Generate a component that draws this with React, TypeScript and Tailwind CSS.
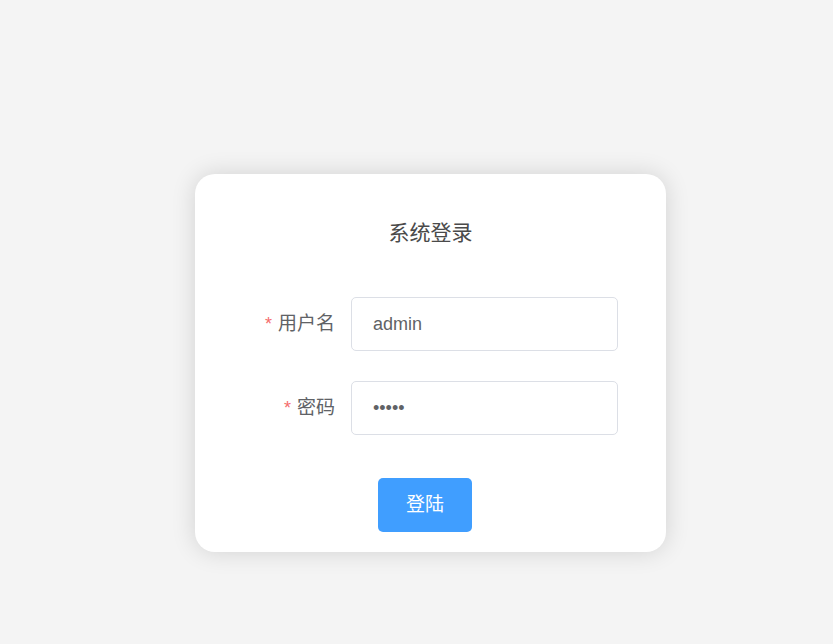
import { useState } from "react";

const fontStack = "font-['Liberation_Sans','Noto_Sans_CJK_SC',sans-serif]";

const FormRow = ({
  label,
  children,
}: {
  label: string;
  children: React.ReactNode;
}) => (
  <div className="flex items-center">
    <label className="w-[108px] shrink-0 pr-[16px] text-right text-[19px] text-[#606266]">
      <span className="mr-[6px] text-[18px] text-[#f56c6c]">*</span>
      {label}
    </label>
    {children}
  </div>
);

export default function App() {
  const [username, setUsername] = useState("admin");
  const [password, setPassword] = useState("12345");

  return (
    <div className={`min-h-[644px] bg-[#f4f4f4] pt-[174px] ${fontStack}`}>
      <div className="ml-[195px] w-[471px] rounded-[20px] bg-white px-[48px] pt-[44px] pb-[20px] shadow-[0_0_24px_rgba(0,0,0,0.14)]">
        <h3 className="text-center text-[21px] leading-[30px] text-[#4a4a4a]">
          系统登录
        </h3>

        <form
          className="mt-[49px] flex flex-col gap-[30px]"
          onSubmit={(e) => e.preventDefault()}
        >
          <FormRow label="用户名">
            <input
              value={username}
              onChange={(e) => setUsername(e.target.value)}
              className="h-[54px] w-[267px] rounded-[5px] border border-[#dcdfe6] px-[21px] text-[18px] text-[#606266] outline-none focus:border-[#409eff]"
            />
          </FormRow>
          <FormRow label="密码">
            <input
              type="password"
              value={password}
              onChange={(e) => setPassword(e.target.value)}
              className="h-[54px] w-[267px] rounded-[5px] border border-[#dcdfe6] px-[21px] text-[18px] text-[#606266] outline-none focus:border-[#409eff]"
            />
          </FormRow>

          <div className="mt-[13px] flex justify-center">
            <button
              type="submit"
              className="mr-[11px] h-[54px] w-[94px] rounded-[5px] bg-[#409eff] text-[19px] text-white hover:bg-[#66b1ff]"
            >
              登陆
            </button>
          </div>
        </form>
      </div>
    </div>
  );
}
